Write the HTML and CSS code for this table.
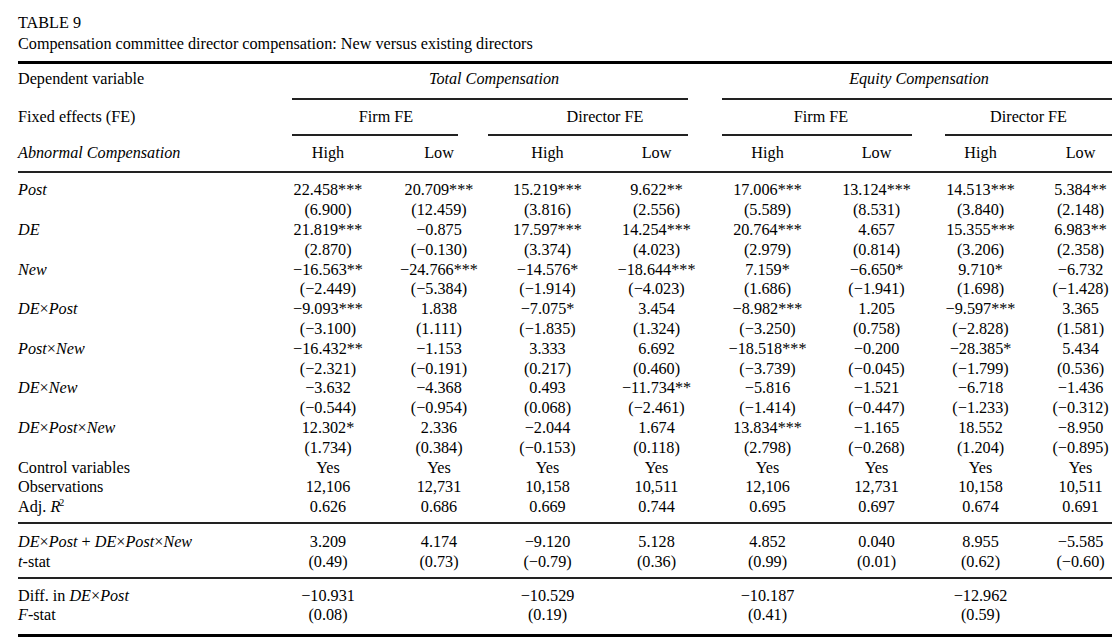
FILE: index.html
```html
<!DOCTYPE html>
<html lang="en">
<head>
<meta charset="utf-8">
<title>Table 9</title>
<link rel="stylesheet" href="styles.css">
</head>
<body>
<div class="page">
  <div class="caption">
    <div>TABLE 9</div>
    <div>Compensation committee director compensation: New versus existing directors</div>
  </div>
  <table class="results">
    <colgroup>
      <col class="c-label">
      <col class="c1"><col class="c2"><col class="c3"><col class="c4">
      <col class="c5"><col class="c6"><col class="c7"><col class="c8">
    </colgroup>
    <thead>
      <tr class="r1">
        <th class="lab">Dependent variable</th>
        <th colspan="4"><div class="grp grp-total"><i>Total Compensation</i></div></th>
        <th colspan="4"><div class="grp grp-equity"><i>Equity Compensation</i></div></th>
      </tr>
      <tr class="r2">
        <th class="lab">Fixed effects (FE)</th>
        <th colspan="2"><div class="sub sub-tf">Firm FE</div></th>
        <th colspan="2"><div class="sub sub-td">Director FE</div></th>
        <th colspan="2"><div class="sub sub-ef">Firm FE</div></th>
        <th colspan="2"><div class="sub sub-ed">Director FE</div></th>
      </tr>
      <tr class="r3">
        <th class="lab"><i>Abnormal Compensation</i></th>
        <th>High</th><th>Low</th><th>High</th><th>Low</th>
        <th>High</th><th>Low</th><th>High</th><th class="last">Low</th>
      </tr>
    </thead>
    <tbody class="sec sec-main">
      <tr><td class="lab"><i>Post</i></td><td>22.458***</td><td>20.709***</td><td>15.219***</td><td>9.622**</td><td>17.006***</td><td>13.124***</td><td>14.513***</td><td class="last">5.384**</td></tr>
      <tr><td class="lab"></td><td>(6.900)</td><td>(12.459)</td><td>(3.816)</td><td>(2.556)</td><td>(5.589)</td><td>(8.531)</td><td>(3.840)</td><td class="last">(2.148)</td></tr>
      <tr><td class="lab"><i>DE</i></td><td>21.819***</td><td>&minus;0.875</td><td>17.597***</td><td>14.254***</td><td>20.764***</td><td>4.657</td><td>15.355***</td><td class="last">6.983**</td></tr>
      <tr><td class="lab"></td><td>(2.870)</td><td>(&minus;0.130)</td><td>(3.374)</td><td>(4.023)</td><td>(2.979)</td><td>(0.814)</td><td>(3.206)</td><td class="last">(2.358)</td></tr>
      <tr><td class="lab"><i>New</i></td><td>&minus;16.563**</td><td>&minus;24.766***</td><td>&minus;14.576*</td><td>&minus;18.644***</td><td>7.159*</td><td>&minus;6.650*</td><td>9.710*</td><td class="last">&minus;6.732</td></tr>
      <tr><td class="lab"></td><td>(&minus;2.449)</td><td>(&minus;5.384)</td><td>(&minus;1.914)</td><td>(&minus;4.023)</td><td>(1.686)</td><td>(&minus;1.941)</td><td>(1.698)</td><td class="last">(&minus;1.428)</td></tr>
      <tr><td class="lab"><i>DE</i>&times;<i>Post</i></td><td>&minus;9.093***</td><td>1.838</td><td>&minus;7.075*</td><td>3.454</td><td>&minus;8.982***</td><td>1.205</td><td>&minus;9.597***</td><td class="last">3.365</td></tr>
      <tr><td class="lab"></td><td>(&minus;3.100)</td><td>(1.111)</td><td>(&minus;1.835)</td><td>(1.324)</td><td>(&minus;3.250)</td><td>(0.758)</td><td>(&minus;2.828)</td><td class="last">(1.581)</td></tr>
      <tr><td class="lab"><i>Post</i>&times;<i>New</i></td><td>&minus;16.432**</td><td>&minus;1.153</td><td>3.333</td><td>6.692</td><td>&minus;18.518***</td><td>&minus;0.200</td><td>&minus;28.385*</td><td class="last">5.434</td></tr>
      <tr><td class="lab"></td><td>(&minus;2.321)</td><td>(&minus;0.191)</td><td>(0.217)</td><td>(0.460)</td><td>(&minus;3.739)</td><td>(&minus;0.045)</td><td>(&minus;1.799)</td><td class="last">(0.536)</td></tr>
      <tr><td class="lab"><i>DE</i>&times;<i>New</i></td><td>&minus;3.632</td><td>&minus;4.368</td><td>0.493</td><td>&minus;11.734**</td><td>&minus;5.816</td><td>&minus;1.521</td><td>&minus;6.718</td><td class="last">&minus;1.436</td></tr>
      <tr><td class="lab"></td><td>(&minus;0.544)</td><td>(&minus;0.954)</td><td>(0.068)</td><td>(&minus;2.461)</td><td>(&minus;1.414)</td><td>(&minus;0.447)</td><td>(&minus;1.233)</td><td class="last">(&minus;0.312)</td></tr>
      <tr><td class="lab"><i>DE</i>&times;<i>Post</i>&times;<i>New</i></td><td>12.302*</td><td>2.336</td><td>&minus;2.044</td><td>1.674</td><td>13.834***</td><td>&minus;1.165</td><td>18.552</td><td class="last">&minus;8.950</td></tr>
      <tr><td class="lab"></td><td>(1.734)</td><td>(0.384)</td><td>(&minus;0.153)</td><td>(0.118)</td><td>(2.798)</td><td>(&minus;0.268)</td><td>(1.204)</td><td class="last">(&minus;0.895)</td></tr>
      <tr><td class="lab">Control variables</td><td>Yes</td><td>Yes</td><td>Yes</td><td>Yes</td><td>Yes</td><td>Yes</td><td>Yes</td><td class="last">Yes</td></tr>
      <tr><td class="lab">Observations</td><td>12,106</td><td>12,731</td><td>10,158</td><td>10,511</td><td>12,106</td><td>12,731</td><td>10,158</td><td class="last">10,511</td></tr>
      <tr><td class="lab">Adj. <i>R</i><sup>2</sup></td><td>0.626</td><td>0.686</td><td>0.669</td><td>0.744</td><td>0.695</td><td>0.697</td><td>0.674</td><td class="last">0.691</td></tr>
    </tbody>
    <tbody class="sec sec-sum">
      <tr><td class="lab"><i>DE</i>&times;<i>Post</i> + <i>DE</i>&times;<i>Post</i>&times;<i>New</i></td><td>3.209</td><td>4.174</td><td>&minus;9.120</td><td>5.128</td><td>4.852</td><td>0.040</td><td>8.955</td><td class="last">&minus;5.585</td></tr>
      <tr><td class="lab"><i>t</i>-stat</td><td>(0.49)</td><td>(0.73)</td><td>(&minus;0.79)</td><td>(0.36)</td><td>(0.99)</td><td>(0.01)</td><td>(0.62)</td><td class="last">(&minus;0.60)</td></tr>
    </tbody>
    <tbody class="sec sec-diff">
      <tr><td class="lab">Diff. in <i>DE</i>&times;<i>Post</i></td><td>&minus;10.931</td><td></td><td>&minus;10.529</td><td></td><td>&minus;10.187</td><td></td><td>&minus;12.962</td><td class="last"></td></tr>
      <tr><td class="lab"><i>F</i>-stat</td><td>(0.08)</td><td></td><td>(0.19)</td><td></td><td>(0.41)</td><td></td><td>(0.59)</td><td class="last"></td></tr>
    </tbody>
  </table>
</div>
</body>
</html>
```

FILE: styles.css
```css
html, body {
  margin: 0;
  padding: 0;
  background: #ffffff;
}

body {
  font-family: "Liberation Serif", "Times New Roman", serif;
  font-size: 16.2px;
  color: #000000;
}

.page {
  padding: 13px 8px 0 18px;
}

.caption {
  line-height: 21px;
  margin-bottom: 6px;
}

.results {
  width: 1094px;
  table-layout: fixed;
  border-collapse: collapse;
  border-top: 3px solid #000000;
  line-height: 19.8px;
}

.c-label { width: 254px; }
.c1 { width: 112px; }
.c2 { width: 110px; }
.c3 { width: 107px; }
.c4 { width: 111px; }
.c5 { width: 111px; }
.c6 { width: 107px; }
.c7 { width: 101px; }
.c8 { width: 81px; }

.results th,
.results td {
  padding: 0;
  font-weight: normal;
  text-align: center;
  vertical-align: top;
  white-space: nowrap;
}

.results .lab {
  text-align: left;
}

.results .last {
  padding-left: 18px;
}

.results sup {
  font-size: 10px;
  line-height: 0;
  vertical-align: 6px;
  margin-left: -1px;
}

/* header rows */
.r1 > th { padding-top: 6px; }
.r2 > th { padding-top: 8px; }
.r3 > th { padding-top: 8px; padding-bottom: 8px; }

.grp {
  padding-bottom: 8px;
  border-bottom: 2px solid #222222;
}

.sub {
  padding-bottom: 6px;
  border-bottom: 2px solid #222222;
}

.grp-total { margin: 0 24px 0 20px; padding-left: 8px; }
.grp-equity { margin: 0 0 0 10px; padding-left: 4px; }

.sub-tf { margin: 0 36px 0 20px; padding-left: 22px; }
.sub-td { margin: 0 24px 0 -6px; padding-left: 34px; }
.sub-ef { margin: 0 18px 0 10px; padding-left: 8px; }
.sub-ed { margin: 0 0 0 15px; }

thead {
  border-bottom: 2px solid #222222;
}

/* body sections */
.sec-main,
.sec-sum {
  border-bottom: 2px solid #222222;
}

.sec-diff {
  border-bottom: 3px solid #000000;
}

.sec-main > tr:first-child > td { padding-top: 8px; }
.sec-main > tr:last-child > td { padding-bottom: 4px; }

.sec-sum > tr:first-child > td { padding-top: 9px; }
.sec-sum > tr:last-child > td { padding-bottom: 4px; }

.sec-diff > tr:first-child > td { padding-top: 8px; }
.sec-diff > tr:last-child > td { padding-bottom: 8px; }
```
